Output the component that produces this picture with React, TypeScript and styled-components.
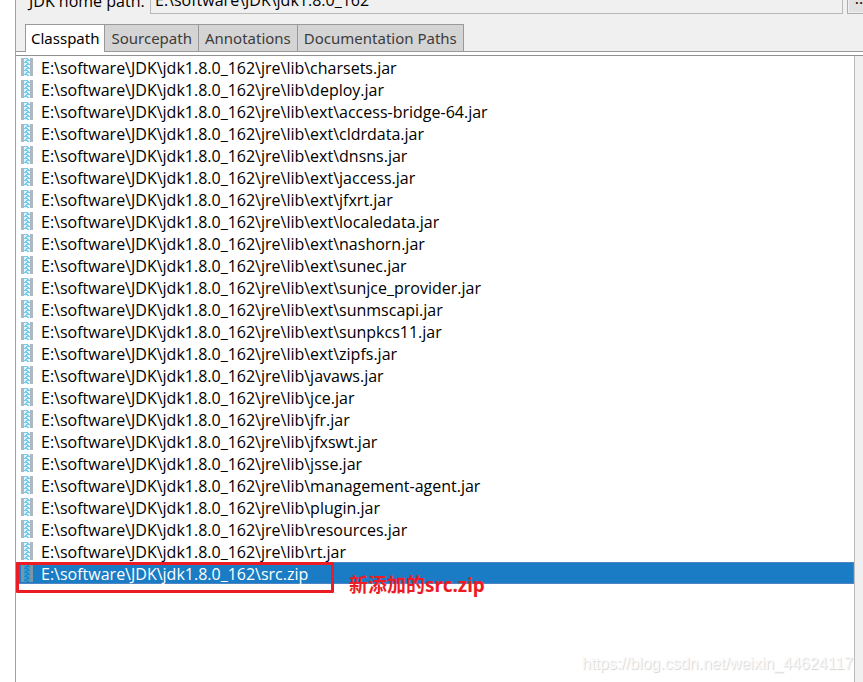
import React from 'react';
import styled, { createGlobalStyle } from 'styled-components';

const GlobalStyle = createGlobalStyle`
  * { box-sizing: border-box; }
  html, body, #root { height: 100%; }
  body {
    margin: 0;
    background: #fff;
    color: #000;
    font: 16px/22px "Open Sans", "Noto Sans CJK SC", sans-serif;
    overflow: hidden;
  }
  button, input { font: inherit; color: inherit; margin: 0; }
`;

const Window = styled.main`
  display: flex;
  flex-direction: column;
  height: 100vh;
  margin-left: 15px;
  border-left: 1px solid #a0a0a0;
  background: #f0f0f0;
  overflow: hidden;
`;

const HomeBar = styled.div`
  display: flex;
  align-items: flex-end;
  flex: none;
  height: 14px;
`;

const HomeLabel = styled.label`
  width: 134px;
  height: 24px;
  padding-left: 13px;
  white-space: nowrap;
`;

const HomeInput = styled.input`
  flex: 1;
  min-width: 0;
  height: 26px;
  padding: 0 4px 2px;
  border: 1px solid #b9b9b9;
  background: #f0f0f0;
  outline: none;
`;

const BrowseButton = styled.button`
  width: 28px;
  height: 28px;
  margin: 0 -12px 0 4px;
  padding: 0 0 4px;
  border: 1px solid #adadad;
  box-shadow: inset 0 0 0 1px #f0f0f0;
  background: #e1e1e1;
`;

const TabBar = styled.div`
  display: flex;
  flex: none;
  margin-top: 10px;
  padding-left: 9px;
  border-bottom: 1px solid #999;
  font-family: "Noto Sans", sans-serif;
  font-size: 15px;
`;

const Tab = styled.button<{ $active?: boolean }>`
  height: ${(p) => (p.$active ? 28 : 27)}px;
  margin-bottom: ${(p) => (p.$active ? -1 : 0)}px;
  margin-right: -1px;
  padding: ${(p) => (p.$active ? '0 5px 1px' : '0 6px')};
  border: 1px solid #999;
  border-bottom: 0;
  background: ${(p) => (p.$active ? '#fff' : '#d4d4d4')};
  color: ${(p) => (p.$active ? '#000' : '#3c3c3c')};
  white-space: nowrap;
`;

const TabPanel = styled.section`
  display: flex;
  flex: 1;
  flex-direction: column;
  min-height: 0;
  padding-top: 3px;
  background: #fff;
`;

const Scroller = styled.div`
  display: flex;
  flex: 1;
  min-height: 0;
  border-top: 1px solid #919191;
`;

const ScrollTrack = styled.div`
  width: 9px;
  border-left: 1px solid #bcbcbc;
  background: #f0f0f0;
`;

const EntryArea = styled.div`
  position: relative;
  flex: 1;
  min-width: 0;
`;

const EntryList = styled.ul`
  margin: 0;
  padding: 0;
  list-style: none;
`;

const Entry = styled.li<{ $selected?: boolean }>`
  position: relative;
  display: flex;
  align-items: center;
  gap: 8px;
  height: 22px;
  padding-left: 5px;
  line-height: 24px;
  white-space: nowrap;
  color: ${(p) => (p.$selected ? '#fff' : '#000')};
  background: ${(p) => (p.$selected ? '#1a7cc4' : 'transparent')};
  box-shadow: ${(p) => (p.$selected ? 'inset 0 0 0 1px #4f83c4' : 'none')};
`;

const EntryPath = styled.span`
  padding-top: 2px;
`;

const Highlight = styled.div`
  position: absolute;
  top: 0;
  left: 0;
  width: 318px;
  height: 31px;
  border: 3px solid #ed1c24;
  border-radius: 1px;
`;

const Note = styled.strong`
  position: absolute;
  top: 12px;
  left: 333px;
  font-family: "Noto Sans", "Noto Sans CJK SC", sans-serif;
  font-size: 19px;
  line-height: 22px;
  color: #ed1c24;
`;

const Watermark = styled.span`
  position: absolute;
  right: 1px;
  bottom: 8px;
  font: 16px/20px "Liberation Sans", sans-serif;
  color: #fafafa;
  text-shadow: 1px 1px 1px #d4d4d4;
`;

const IconSvg = styled.svg`
  flex: none;
  display: block;
`;

const TEETH = [0, 4, 8, 12, 16];

function ArchiveIcon({ selected }: { selected?: boolean }) {
  const side = selected ? '#7b95a8' : '#aeb8be';
  const tooth = selected ? '#148ac8' : '#74cdec';
  const base = selected ? '#3c9ccf' : '#e0f4fb';
  return (
    <IconSvg width="12" height="18" viewBox="0 0 12 18" shapeRendering="crispEdges" aria-hidden="true">
      <path d="M0 0h3v18h-3zM9 0h3v18h-3z" fill={side} />
      <rect x="3" width="6" height="18" fill={base} />
      {TEETH.map((y) => (
        <path key={y} d={`M3 ${y}h4v1h-4zM6 ${y + 1}h2v1h-2z`} fill={tooth} />
      ))}
      {TEETH.slice(0, 4).map((y) => (
        <path key={y} d={`M5 ${y + 2}h4v1h-4zM4 ${y + 3}h2v1h-2z`} fill={tooth} />
      ))}
    </IconSvg>
  );
}

const ROOT = 'E:\\software\\JDK\\jdk1.8.0_162';
const JARS = [
  'charsets', 'deploy', 'ext\\access-bridge-64', 'ext\\cldrdata', 'ext\\dnsns', 'ext\\jaccess',
  'ext\\jfxrt', 'ext\\localedata', 'ext\\nashorn', 'ext\\sunec', 'ext\\sunjce_provider',
  'ext\\sunmscapi', 'ext\\sunpkcs11', 'ext\\zipfs', 'javaws', 'jce', 'jfr', 'jfxswt', 'jsse',
  'management-agent', 'plugin', 'resources', 'rt',
];
const TABS = ['Classpath', 'Sourcepath', 'Annotations', 'Documentation Paths'];

export default function App() {
  return (
    <>
      <GlobalStyle />
      <Window>
        <HomeBar>
          <HomeLabel htmlFor="jdk-home">JDK home path:</HomeLabel>
          <HomeInput id="jdk-home" type="text" readOnly value={ROOT} />
          <BrowseButton type="button" aria-label="Browse">...</BrowseButton>
        </HomeBar>
        <TabBar role="tablist">
          {TABS.map((name, i) => (
            <Tab key={name} type="button" role="tab" aria-selected={i === 0} $active={i === 0}>
              {name}
            </Tab>
          ))}
        </TabBar>
        <TabPanel role="tabpanel">
          <Scroller>
            <EntryArea>
              <EntryList>
                {JARS.map((jar) => (
                  <Entry key={jar}>
                    <ArchiveIcon />
                    <EntryPath>{`${ROOT}\\jre\\lib\\${jar}.jar`}</EntryPath>
                  </Entry>
                ))}
                <Entry $selected>
                  <ArchiveIcon selected />
                  <EntryPath>{`${ROOT}\\src.zip`}</EntryPath>
                  <Highlight />
                  <Note>新添加的src.zip</Note>
                </Entry>
              </EntryList>
              <Watermark>https://blog.csdn.net/weixin_44624117</Watermark>
            </EntryArea>
            <ScrollTrack />
          </Scroller>
        </TabPanel>
      </Window>
    </>
  );
}
